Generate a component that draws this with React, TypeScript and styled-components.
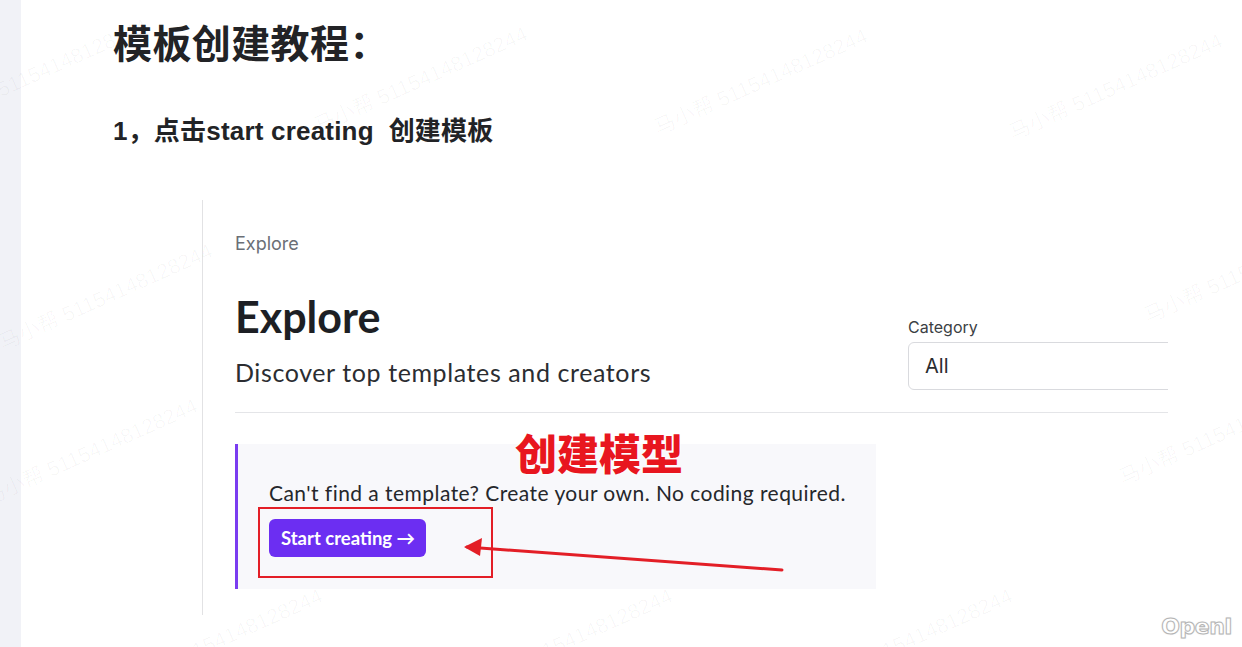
import React, { FC } from 'react';
import styled, { createGlobalStyle } from 'styled-components';

const GlobalStyle = createGlobalStyle`
  html, body {
    margin: 0;
    padding: 0;
    background: #ffffff;
  }
  * {
    box-sizing: border-box;
  }
`;

const Page = styled.div`
  position: relative;
  display: flex;
  width: 1242px;
  height: 647px;
  overflow: hidden;
  background: #ffffff;
`;

const Gutter = styled.div`
  width: 21px;
  flex-shrink: 0;
  background: #f1f2f7;
`;

const Main = styled.main`
  flex: 1;
  padding: 18px 0 0 92px;
  font-family: 'Liberation Sans', 'Noto Sans CJK SC', sans-serif;
  color: #222326;
`;

const Title = styled.h1`
  margin: 0;
  font-size: 39px;
  line-height: 46px;
  font-weight: 700;
  font-family: 'Noto Sans CJK SC', sans-serif;
  letter-spacing: 0.4px;
`;

const Step = styled.h2`
  margin: 52px 0 0;
  font-size: 26px;
  line-height: 30px;
  font-weight: 700;
  letter-spacing: 0.2px;
`;

const Shot = styled.section`
  width: 966px;
  height: 415px;
  margin: 54px 0 0 89px;
  padding-left: 32px;
  border-left: 1px solid #e2e2e4;
  overflow: hidden;
  font-family: Lato, 'Open Sans', sans-serif;
`;

const Crumb = styled.div`
  padding-top: 33px;
  font-family: Inter, sans-serif;
  font-size: 18px;
  line-height: 22px;
  color: #6b6f76;
`;

const HeaderRow = styled.div`
  display: flex;
  justify-content: space-between;
  align-items: flex-end;
  width: 933px;
`;

const HeaderText = styled.div`
  padding-bottom: 3px;
`;

const Heading = styled.h3`
  margin: 37px 0 0;
  font-size: 43px;
  line-height: 50px;
  font-weight: 700;
  color: #1d1f24;
`;

const Lead = styled.p`
  margin: 15px 0 0;
  font-size: 25px;
  line-height: 30px;
  letter-spacing: 0.6px;
  color: #2b2d31;
`;

const Field = styled.div`
  width: 260px;
  font-family: Inter, sans-serif;
`;

const FieldLabel = styled.div`
  font-size: 16px;
  line-height: 22px;
  color: #3c3f44;
  margin-bottom: 4px;
`;

const Select = styled.div`
  width: 300px;
  height: 48px;
  display: flex;
  align-items: center;
  padding-left: 16px;
  border: 1px solid #d9dade;
  border-radius: 6px;
  font-size: 20px;
  color: #2a2c30;
`;

const Divider = styled.hr`
  margin: 22px 0 0;
  border: 0;
  border-top: 1px solid #e4e5e8;
  width: 960px;
`;

const Callout = styled.div`
  width: 641px;
  height: 145px;
  margin-top: 31px;
  padding: 35px 0 0 31px;
  border-left: 3px solid #7a3cf0;
  background: #f8f8fb;
`;

const CalloutText = styled.p`
  margin: 0;
  font-size: 21px;
  line-height: 28px;
  letter-spacing: 0.45px;
  color: #25272b;
`;

const StartButton = styled.button`
  margin-top: 12px;
  height: 38px;
  padding: 0 11px 0 12px;
  border: 0;
  border-radius: 6px;
  background: #6c2ef2;
  color: #ffffff;
  font-family: Lato, sans-serif;
  font-size: 18.5px;
  font-weight: 700;
`;

const Mark = styled.div`
  position: absolute;
  left: 258px;
  top: 507px;
  width: 235px;
  height: 71px;
  border: 2px solid #e31e26;
`;

const Note = styled.div`
  position: absolute;
  left: 515px;
  top: 426px;
  font-family: 'Noto Sans CJK SC', sans-serif;
  font-size: 42px;
  line-height: 52px;
  font-weight: 900;
  color: #e8161f;
  text-shadow: 0 0 3px #ffffff, 0 0 3px #ffffff;
`;

const Arrow = styled.svg`
  position: absolute;
  left: 455px;
  top: 530px;
`;

const Watermark = styled.div`
  position: absolute;
  font-family: 'Liberation Sans', 'Noto Sans CJK SC', sans-serif;
  font-size: 21px;
  white-space: nowrap;
  color: rgba(0, 0, 0, 0.03);
  transform: translate(-50%, -50%) rotate(-24deg);
  pointer-events: none;
`;

const Logo = styled.div`
  position: absolute;
  right: 10px;
  bottom: 8px;
  font-family: 'DejaVu Sans', sans-serif;
  font-size: 22px;
  font-weight: 700;
  letter-spacing: -0.5px;
  color: #ffffff;
  -webkit-text-stroke: 1px #b4b4b4;
  text-shadow: 0 0 2px rgba(0, 0, 0, 0.15);
`;

const marks = [
  { x: 40, y: 70 },
  { x: 420, y: 78 },
  { x: 760, y: 80 },
  { x: 1115, y: 85 },
  { x: 105, y: 295 },
  { x: 1250, y: 268 },
  { x: 90, y: 450 },
  { x: 1225, y: 430 },
  { x: 215, y: 640 },
  { x: 565, y: 640 },
  { x: 905, y: 640 },
];

const App: FC = () => (
  <Page>
    <GlobalStyle />
    <Gutter />

    <Main>
      <Title>模板创建教程：</Title>
      <Step>1，点击start creating&nbsp;&nbsp;创建模板</Step>

      <Shot>
        <Crumb>Explore</Crumb>

        <HeaderRow>
          <HeaderText>
            <Heading>Explore</Heading>
            <Lead>Discover top templates and creators</Lead>
          </HeaderText>

          <Field>
            <FieldLabel>Category</FieldLabel>
            <Select>All</Select>
          </Field>
        </HeaderRow>

        <Divider />

        <Callout>
          <CalloutText>Can't find a template? Create your own. No coding required.</CalloutText>
          <StartButton>Start creating →</StartButton>
        </Callout>
      </Shot>
    </Main>

    {marks.map((m) => (
      <Watermark key={`${m.x}-${m.y}`} style={{ left: m.x, top: m.y }}>
        马小帮 51154148128244
      </Watermark>
    ))}

    <Note>创建模型</Note>
    <Mark />
    <Arrow width="340" height="50" viewBox="0 0 340 50">
      <line x1="12" y1="17" x2="327" y2="40" stroke="#e31e26" strokeWidth="3" strokeLinecap="round" />
      <polygon points="9,17 27,8 25,26" fill="#e31e26" />
    </Arrow>

    <Logo>OpenI</Logo>
  </Page>
);

export default App;
